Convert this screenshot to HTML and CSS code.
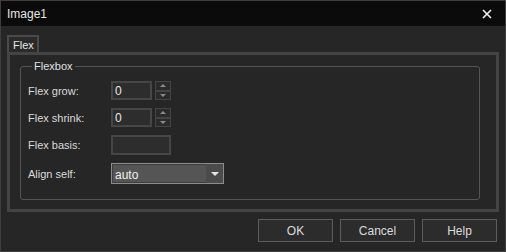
FILE: index.html
```html
<!DOCTYPE html>
<html lang="en">
<head>
    <meta charset="UTF-8">
    <title>Image1</title>
    <link rel="stylesheet" href="styles.css">
</head>
<body>
    <div class="window">
        <div class="titlebar">
            <span class="title">Image1</span>
            <svg class="close" width="10" height="10" viewBox="0 0 10 10">
                <path d="M1 1 L9 9 M9 1 L1 9" stroke="#f2f2f2" stroke-width="1.6" fill="none"/>
            </svg>
        </div>

        <div class="content">
            <div class="tabs">
                <div class="tab">Flex</div>
            </div>
            <div class="panel">
                <fieldset class="group">
                    <legend>Flexbox</legend>
                    <div class="form">
                        <label>Flex grow:</label>
                        <div class="spin">
                            <div class="field">0</div>
                            <div class="spin-btns">
                                <div class="spin-btn"><span class="arrow-up"></span></div>
                                <div class="spin-btn"><span class="arrow-down"></span></div>
                            </div>
                        </div>

                        <label>Flex shrink:</label>
                        <div class="spin">
                            <div class="field">0</div>
                            <div class="spin-btns">
                                <div class="spin-btn"><span class="arrow-up"></span></div>
                                <div class="spin-btn"><span class="arrow-down"></span></div>
                            </div>
                        </div>

                        <label>Flex basis:</label>
                        <div class="field wide"></div>

                        <label>Align self:</label>
                        <div class="select">
                            <span class="value">auto</span>
                            <span class="drop"><span class="arrow-down light"></span></span>
                        </div>
                    </div>
                </fieldset>
            </div>
        </div>

        <div class="footer">
            <button>OK</button>
            <button>Cancel</button>
            <button>Help</button>
        </div>
    </div>
</body>
</html>
```

FILE: styles.css
```css
/* Dialog window */
body {
    margin: 0;
    font-family: 'Liberation Sans', Arial, sans-serif;
    font-size: 11px;
    color: #dcdcdc;
    background-color: #262626;
}

.window {
    width: 506px;
    height: 252px;
    box-sizing: border-box;
    border: 1px solid #3e3e3e;
    background-color: #262626;
    display: flex;
    flex-direction: column;
}

.titlebar {
    height: 25px;
    background-color: #0b0b0b;
    display: flex;
    align-items: center;
    justify-content: space-between;
    padding: 0 13px 0 6px;
    font-size: 12px;
    color: #e6e6e6;
}

.close {
    display: block;
}

/* Tab area */
.content {
    padding: 9px 6px 0 6px;
}

.tabs {
    display: flex;
    height: 17px;
}

.tab {
    width: 32px;
    box-sizing: border-box;
    border: 2px solid #4a4a4a;
    border-bottom: none;
    background-color: #2a2a2a;
    padding: 2px 0 0 4px;
    font-size: 11px;
    color: #e8e8e8;
}

.panel {
    height: 160px;
    box-sizing: border-box;
    border: 3px solid #444444;
    padding: 5px 16px 0 10px;
}

/* Group box */
.group {
    margin: 0;
    border: 1px solid #555555;
    border-radius: 3px;
    padding: 9px 0 0 7px;
    height: 140px;
    box-sizing: border-box;
}

.group legend {
    padding: 0 2px;
    margin-left: 4px;
    color: #e0e0e0;
}

.form {
    display: grid;
    grid-template-columns: 83px auto;
    grid-template-rows: 19px 19px 20px 21px;
    row-gap: 8px;
    align-items: center;
    justify-items: start;
}

label {
    color: #dadada;
}

/* Inputs */
.spin {
    display: flex;
    gap: 3px;
    height: 19px;
}

.field {
    width: 41px;
    height: 19px;
    box-sizing: border-box;
    border: 2px solid #464646;
    background-color: #2d2d2d;
    padding: 1px 0 0 2px;
    font-size: 12px;
    color: #e8e8e8;
}

.field.wide {
    width: 60px;
    height: 20px;
}

.spin-btns {
    width: 16px;
    display: flex;
    flex-direction: column;
}

.spin-btn {
    flex: 1;
    border: 1px solid #444444;
    background-color: #2b2b2b;
    display: flex;
    align-items: center;
    justify-content: center;
}

.arrow-up,
.arrow-down {
    width: 0;
    height: 0;
    border-left: 3px solid transparent;
    border-right: 3px solid transparent;
}

.arrow-up {
    border-bottom: 3px solid #8a8a8a;
}

.arrow-down {
    border-top: 3px solid #8a8a8a;
}

.arrow-down.light {
    border-left-width: 4px;
    border-right-width: 4px;
    border-top: 4px solid #e6e6e6;
}

.select {
    width: 113px;
    height: 21px;
    box-sizing: border-box;
    border: 1px solid #8c8c8c;
    display: flex;
}

.select .value {
    flex: 1;
    background-color: #555555;
    border: 1px solid #3e3e3e;
    border-right: none;
    padding: 3px 0 0 2px;
    font-size: 12px;
    color: #f0f0f0;
}

.select .drop {
    width: 17px;
    background-color: #4b4b4b;
    display: flex;
    align-items: center;
    justify-content: center;
}

/* Footer buttons */
.footer {
    display: flex;
    justify-content: flex-end;
    gap: 7px;
    padding: 7px 8px 0 0;
}

button {
    width: 75px;
    height: 23px;
    border: 1px solid #5c5c5c;
    background-color: #2c2c2c;
    color: #dcdcdc;
    font-family: 'Liberation Sans', Arial, sans-serif;
    font-size: 12px;
    padding: 0;
}
```
